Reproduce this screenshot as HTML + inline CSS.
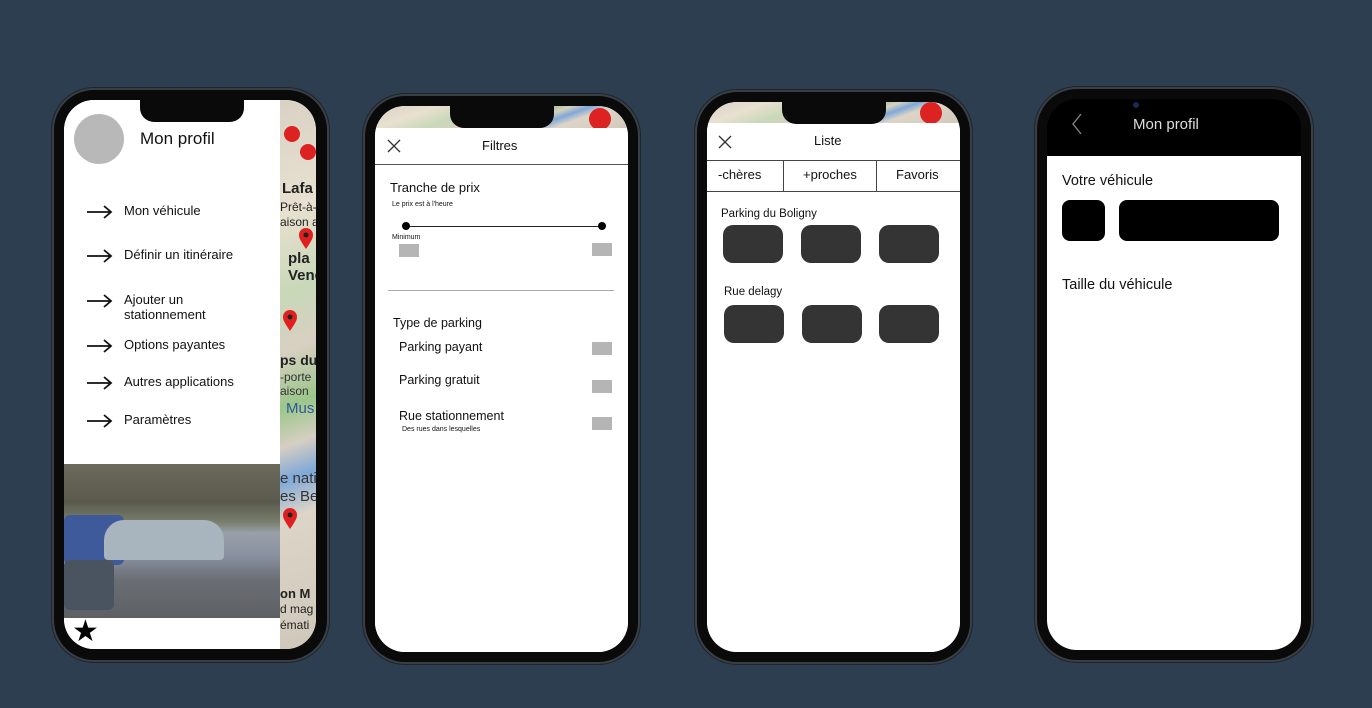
<!DOCTYPE html>
<html><head><meta charset="utf-8"><style>
*{margin:0;padding:0;box-sizing:border-box}
body{width:1372px;height:708px;background:#2d3e50;position:relative;overflow:hidden;font-family:"Liberation Sans",sans-serif;color:#111}
.ph{position:absolute;background:#0a0a0a;border-radius:42px;border:2px solid #3a3f45;box-shadow:0 0 0 1px #1c242c}
.sc{position:absolute;background:#fff;border-radius:30px;overflow:hidden}
.notch{position:absolute;width:104px;height:22px;background:#0a0a0a;border-radius:0 0 14px 14px;left:50%;margin-left:-52px;top:0;z-index:5}
.a{position:absolute;white-space:nowrap}
.gr{position:absolute;background:#b5b5b5}
.dk{position:absolute;background:#343434;border-radius:10px}
.map{background:linear-gradient(160deg,#d9d2c4 0%,#e8e0d0 20%,#c8d8b8 35%,#d8d0c2 45%,#9bc68a 55%,#d6cfc1 62%,#7fa8d8 68%,#ddd5c7 75%,#cfc7b9 100%)}
</style></head><body>

<!-- Phone 1 -->
<div class="ph" style="left:52px;top:88px;width:277px;height:574px"></div>
<div class="sc" style="left:64px;top:100px;width:252px;height:549px">
 <div class="a map" style="left:216px;top:0;width:36px;height:549px;overflow:hidden">
  <div class="a" style="left:2px;top:80px;color:#222;font-weight:bold;font-size:15px">Lafa</div>
  <div class="a" style="left:0;top:100px;color:#222;font-size:12px;line-height:15px">Prêt-à-<br>aison a</div>
  <div class="a" style="left:8px;top:150px;color:#222;font-weight:bold;font-size:15px;line-height:17px">pla<br>Vend</div>
  <div class="a" style="left:0;top:252px;color:#222;font-weight:bold;font-size:14px">ps du</div>
  <div class="a" style="left:0;top:270px;color:#333;font-size:12px;line-height:14px">-porte<br>aison</div>
  <div class="a" style="left:6px;top:300px;color:#2b5a9a;font-size:15px">Mus</div>
  <div class="a" style="left:0;top:370px;color:#333;font-size:15px;line-height:18px">e nati<br>es Be</div>
  <div class="a" style="left:0;top:486px;color:#222;font-weight:bold;font-size:13px;line-height:15px">on M<br><span style="font-weight:normal;font-size:12px">d mag<br>émati</span></div>
  <svg class="a" style="left:18px;top:128px" width="16" height="22"><path d="M8 21 C2 12 1 10 1 7 A7 7 0 0 1 15 7 C15 10 14 12 8 21Z" fill="#e02020"/><circle cx="8" cy="7" r="2.5" fill="#222"/></svg>
  <svg class="a" style="left:2px;top:210px" width="16" height="22"><path d="M8 21 C2 12 1 10 1 7 A7 7 0 0 1 15 7 C15 10 14 12 8 21Z" fill="#e02020"/><circle cx="8" cy="7" r="2.5" fill="#222"/></svg>
  <svg class="a" style="left:2px;top:408px" width="16" height="22"><path d="M8 21 C2 12 1 10 1 7 A7 7 0 0 1 15 7 C15 10 14 12 8 21Z" fill="#e02020"/><circle cx="8" cy="7" r="2.5" fill="#222"/></svg>
  <div class="a" style="left:4px;top:26px;width:16px;height:16px;border-radius:50%;background:#d22"></div>
  <div class="a" style="left:20px;top:44px;width:16px;height:16px;border-radius:50%;background:#d22"></div>
 </div>
 <div class="a" style="left:0;top:0;width:216px;height:364px;background:#fff"></div>
 <div class="a" style="left:10px;top:14px;width:50px;height:50px;border-radius:50%;background:#b8b8b8"></div>
 <div class="a" style="left:76px;top:29px;font-size:17px">Mon profil</div>
 <div class="a" style="left:60px;top:103px;font-size:13px">Mon véhicule</div>
 <div class="a" style="left:60px;top:147px;font-size:13px">Définir un itinéraire</div>
 <div class="a" style="left:60px;top:192px;font-size:13px;line-height:15px">Ajouter un<br>stationnement</div>
 <div class="a" style="left:60px;top:237px;font-size:13px">Options payantes</div>
 <div class="a" style="left:60px;top:274px;font-size:13px">Autres applications</div>
 <div class="a" style="left:60px;top:312px;font-size:13px">Paramètres</div>
 <svg class="a" style="left:22px;top:104px" width="28" height="230" fill="none" stroke="#111" stroke-width="1.8">
  <g><path d="M1 8H25M18 2L25 8L18 14"/></g>
  <g transform="translate(0,44)"><path d="M1 8H25M18 2L25 8L18 14"/></g>
  <g transform="translate(0,89)"><path d="M1 8H25M18 2L25 8L18 14"/></g>
  <g transform="translate(0,134)"><path d="M1 8H25M18 2L25 8L18 14"/></g>
  <g transform="translate(0,171)"><path d="M1 8H25M18 2L25 8L18 14"/></g>
  <g transform="translate(0,209)"><path d="M1 8H25M18 2L25 8L18 14"/></g>
 </svg>
 <div class="a" style="left:0;top:364px;width:216px;height:154px;background:linear-gradient(180deg,#6b6a5c 0%,#5a5a4c 25%,#7a8070 38%,#9aa0a8 45%,#8890a0 60%,#6a6e74 75%,#5e6064 100%)"></div>
 <div class="a" style="left:0;top:415px;width:60px;height:50px;background:#3e5a9a;border-radius:6px"></div>
 <div class="a" style="left:40px;top:420px;width:120px;height:40px;background:#a8b4be;border-radius:20px 20px 4px 4px"></div>
 <div class="a" style="left:0;top:460px;width:50px;height:50px;background:#4a5460;border-radius:6px"></div>
 <div class="a" style="left:0;top:518px;width:216px;height:31px;background:#fff"></div>
 <div class="a" style="left:8px;top:514px;font-size:30px;color:#000">★</div>
 <div class="notch" style="left:128px"></div>
</div>

<!-- Phone 2 -->
<div class="ph" style="left:363px;top:94px;width:277px;height:570px"></div>
<div class="sc" style="left:375px;top:106px;width:253px;height:546px">
 <div class="a map" style="left:0;top:0;width:253px;height:24px"></div>
 <div class="a" style="top:2px;width:22px;height:22px;border-radius:50%;background:#d22;left:214px"></div>
 <div class="a" style="left:0;top:22px;width:253px;height:524px;background:#fff"></div>
 <svg class="a" style="left:12px;top:33px" width="14" height="14" stroke="#333" stroke-width="1.3"><path d="M1 1L13 13M13 1L1 13"/></svg>
 <div class="a" style="left:107px;top:32px;font-size:13px">Filtres</div>
 <div class="a" style="left:0;top:58px;width:253px;height:1px;background:#555"></div>
 <div class="a" style="left:15px;top:74px;font-size:13px">Tranche de prix</div>
 <div class="a" style="left:17px;top:95px;font-size:7px">Le prix est à l'heure</div>
 <div class="a" style="left:31px;top:120px;width:197px;height:1px;background:#222"></div>
 <div class="a" style="left:27px;top:116px;width:8px;height:8px;border-radius:50%;background:#000"></div>
 <div class="a" style="left:223px;top:116px;width:8px;height:8px;border-radius:50%;background:#000"></div>
 <div class="a" style="left:17px;top:128px;font-size:7px">Minimum</div>
 <div class="gr" style="left:24px;top:138px;width:20px;height:13px"></div>
 <div class="gr" style="left:217px;top:137px;width:20px;height:13px"></div>
 <div class="a" style="left:13px;top:184px;width:226px;height:1px;background:#aaa"></div>
 <div class="a" style="left:18px;top:210px;font-size:12.5px">Type de parking</div>
 <div class="a" style="left:24px;top:234px;font-size:12.5px">Parking payant</div>
 <div class="a" style="left:24px;top:267px;font-size:12.5px">Parking gratuit</div>
 <div class="a" style="left:24px;top:303px;font-size:12.5px">Rue stationnement</div>
 <div class="a" style="left:27px;top:320px;font-size:7px">Des rues dans lesquelles</div>
 <div class="gr" style="left:217px;top:236px;width:20px;height:13px"></div>
 <div class="gr" style="left:217px;top:274px;width:20px;height:13px"></div>
 <div class="gr" style="left:217px;top:311px;width:20px;height:13px"></div>
 <div class="notch"></div>
</div>

<!-- Phone 3 -->
<div class="ph" style="left:695px;top:90px;width:277px;height:574px"></div>
<div class="sc" style="left:707px;top:102px;width:253px;height:550px">
 <div class="a map" style="left:0;top:0;width:253px;height:22px"></div>
 <div class="a" style="left:213px;top:0;width:22px;height:22px;border-radius:50%;background:#d22"></div>
 <div class="a" style="left:0;top:21px;width:253px;height:530px;background:#fff"></div>
 <svg class="a" style="left:11px;top:33px" width="14" height="14" stroke="#333" stroke-width="1.3"><path d="M1 1L13 13M13 1L1 13"/></svg>
 <div class="a" style="left:107px;top:31px;font-size:13px">Liste</div>
 <div class="a" style="left:0;top:58px;width:253px;height:1px;background:#444"></div>
 <div class="a" style="left:0;top:89px;width:253px;height:1px;background:#444"></div>
 <div class="a" style="left:76px;top:58px;width:1px;height:31px;background:#444"></div>
 <div class="a" style="left:169px;top:58px;width:1px;height:31px;background:#444"></div>
 <div class="a" style="left:11px;top:65px;font-size:13px">-chères</div>
 <div class="a" style="left:96px;top:65px;font-size:13px">+proches</div>
 <div class="a" style="left:189px;top:65px;font-size:13px">Favoris</div>
 <div class="a" style="left:14px;top:106px;font-size:11.5px">Parking du Boligny</div>
 <div class="dk" style="left:16px;top:123px;width:60px;height:38px"></div>
 <div class="dk" style="left:94px;top:123px;width:60px;height:38px"></div>
 <div class="dk" style="left:172px;top:123px;width:60px;height:38px"></div>
 <div class="a" style="left:17px;top:184px;font-size:11.5px">Rue delagy</div>
 <div class="dk" style="left:17px;top:203px;width:60px;height:38px"></div>
 <div class="dk" style="left:95px;top:203px;width:60px;height:38px"></div>
 <div class="dk" style="left:172px;top:203px;width:60px;height:38px"></div>
 <div class="notch"></div>
</div>

<!-- Phone 4 -->
<div class="ph" style="left:1035px;top:87px;width:278px;height:575px"></div>
<div class="sc" style="left:1047px;top:99px;width:254px;height:551px;background:#000">
 <svg class="a" style="left:24px;top:14px" width="12" height="22" stroke="#888" stroke-width="1.3" fill="none"><path d="M10 1L2 11L10 21"/></svg>
 <div class="a" style="left:86px;top:17px;font-size:15px;color:#ddd">Mon profil</div>
 <div class="a" style="left:0;top:57px;width:254px;height:494px;background:#fff"></div>
 <div class="a" style="left:15px;top:74px;font-size:14.5px">Votre véhicule</div>
 <div class="a" style="left:15px;top:101px;width:43px;height:41px;background:#000;border-radius:8px"></div>
 <div class="a" style="left:72px;top:101px;width:160px;height:41px;background:#000;border-radius:8px"></div>
 <div class="a" style="left:15px;top:178px;font-size:14.5px">Taille du véhicule</div>
 <div class="a" style="left:86px;top:3px;width:6px;height:6px;border-radius:50%;background:#1a2a55"></div>
</div>
</body></html>
